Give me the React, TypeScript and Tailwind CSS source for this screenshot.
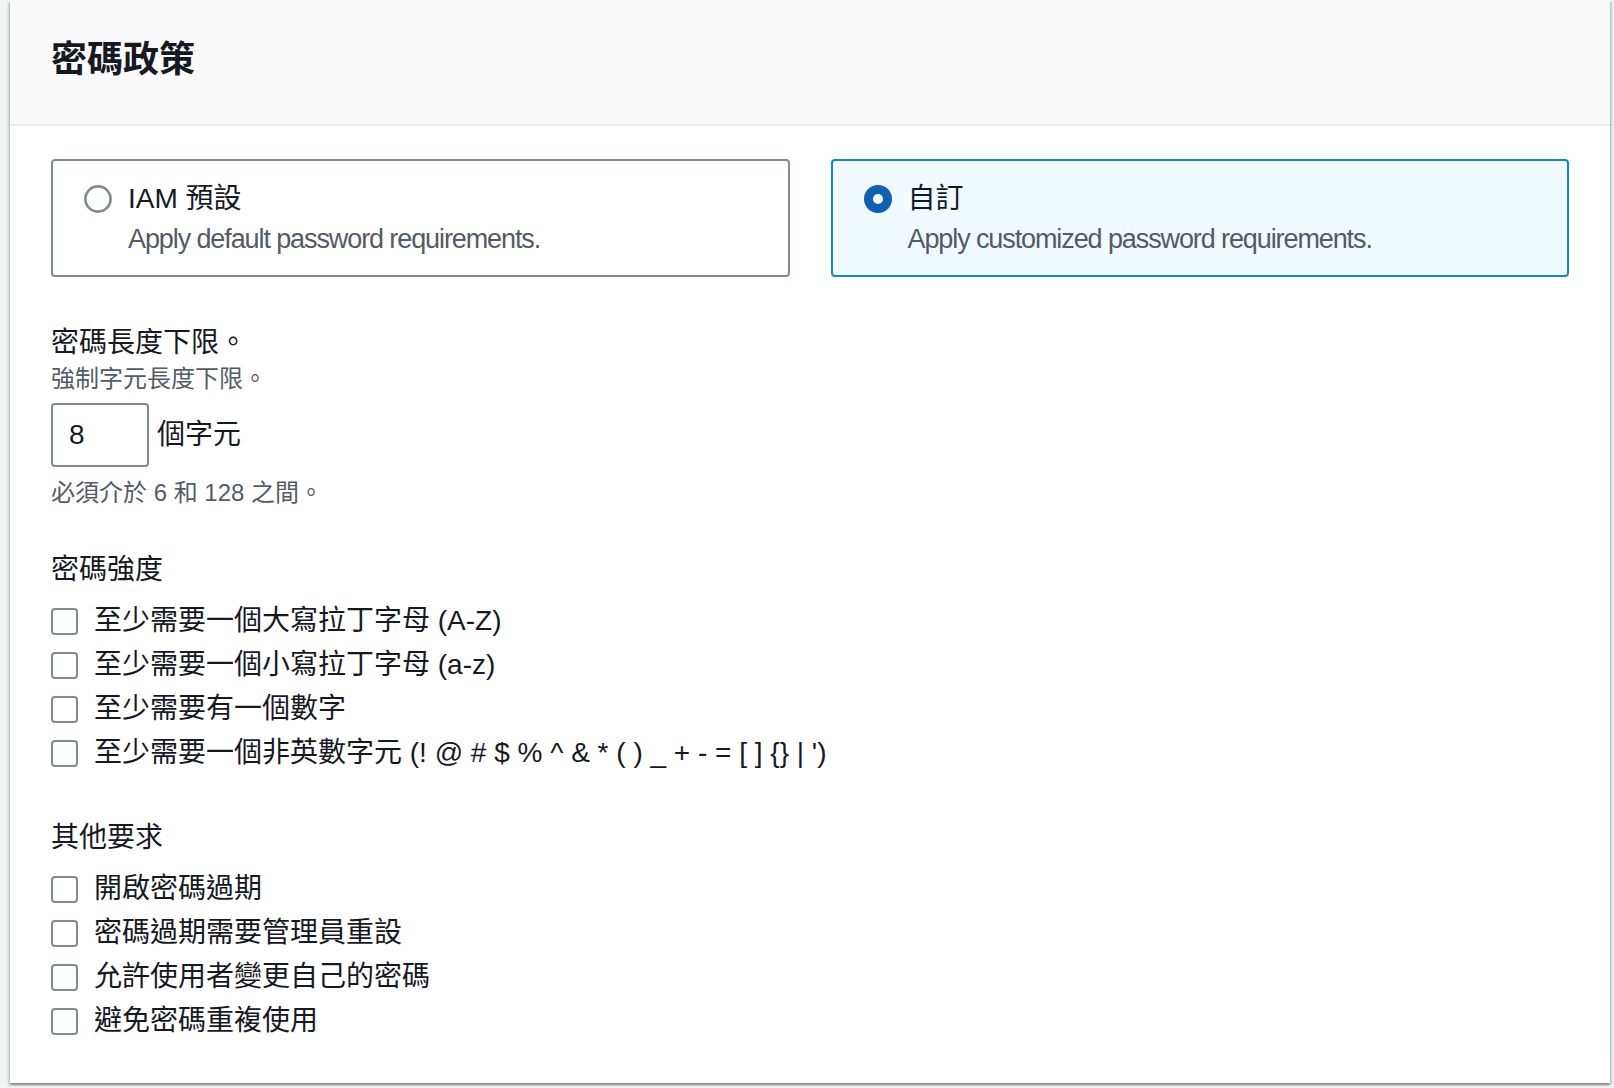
import { useState } from 'react';

interface Choice {
  id: string;
  title: string;
  description: string;
}

const policyChoices: Choice[] = [
  { id: 'default', title: 'IAM 預設', description: 'Apply default password requirements.' },
  { id: 'custom', title: '自訂', description: 'Apply customized password requirements.' },
];

const strengthRules = [
  '至少需要一個大寫拉丁字母 (A-Z)',
  '至少需要一個小寫拉丁字母 (a-z)',
  '至少需要有一個數字',
  "至少需要一個非英數字元 (! @ # $ % ^ & * ( ) _ + - = [ ] {} | ')",
];

const otherRules = [
  '開啟密碼過期',
  '密碼過期需要管理員重設',
  '允許使用者變更自己的密碼',
  '避免密碼重複使用',
];

function RadioMark({ checked }: { checked: boolean }) {
  return (
    <svg width="28" height="28" viewBox="0 0 28 28" className="shrink-0">
      {checked ? (
        <circle cx="14" cy="14" r="9.5" fill="#ffffff" stroke="#1061b1" strokeWidth="9" />
      ) : (
        <circle cx="14" cy="14" r="12.6" fill="#ffffff" stroke="#7f8c8d" strokeWidth="2.6" />
      )}
    </svg>
  );
}

function CheckRow({
  label,
  checked,
  onToggle,
}: {
  label: string;
  checked: boolean;
  onToggle: () => void;
}) {
  return (
    <label className="flex items-center gap-[16px] h-[40px] cursor-pointer">
      <span
        onClick={onToggle}
        className={`w-[27px] h-[27px] rounded-[4px] border-[2.5px] shrink-0 flex items-center justify-center ${
          checked ? 'bg-[#1061b1] border-[#1061b1]' : 'bg-white border-[#7f8c8d]'
        }`}
      >
        {checked && (
          <svg width="18" height="18" viewBox="0 0 18 18">
            <path d="M3 9l4 4 8-8" fill="none" stroke="#fff" strokeWidth="3" />
          </svg>
        )}
      </span>
      <span className="text-[28px] leading-[40px] text-[#16191f] whitespace-nowrap">{label}</span>
    </label>
  );
}

export default function App() {
  const [policy, setPolicy] = useState('custom');
  const [checked, setChecked] = useState<Record<string, boolean>>({});

  const toggle = (key: string) => setChecked({ ...checked, [key]: !checked[key] });

  return (
    <div className="min-h-screen bg-[#f2f3f3] pl-[10px] pb-[5px] font-['Liberation_Sans','Noto_Sans_CJK_TC',sans-serif]">
      <div className="w-[1600px] bg-white shadow-[0_2px_2px_0_rgba(0,28,36,0.3),2px_2px_2px_0_rgba(0,28,36,0.15),-2px_2px_2px_0_rgba(0,28,36,0.15)]">
        <div className="h-[126px] bg-[#fafafa] border-b-2 border-[#eaeded] pl-[41px] pt-[38px]">
          <h2 className="text-[36px] leading-[44px] font-bold text-[#16191f]">密碼政策</h2>
        </div>

        <div className="px-[41px] pt-[33px] pb-[42px]">
          <div className="grid grid-cols-2 gap-[41px]">
            {policyChoices.map((choice) => {
              const selected = policy === choice.id;
              return (
                <div
                  key={choice.id}
                  onClick={() => setPolicy(choice.id)}
                  className={`h-[118px] rounded-[4px] border-2 pl-[31px] pt-[18px] flex gap-[16px] cursor-pointer ${
                    selected ? 'bg-[#f1faff] border-[#1a86c0]' : 'bg-white border-[#7f8c8d]'
                  }`}
                >
                  <div className="h-[40px] flex items-center">
                    <RadioMark checked={selected} />
                  </div>
                  <div>
                    <div className="text-[28px] leading-[40px] text-[#16191f]">{choice.title}</div>
                    <div className="text-[27px] leading-[40px] tracking-[-1.1px] text-[#545b64]">
                      {choice.description}
                    </div>
                  </div>
                </div>
              );
            })}
          </div>

          <div className="mt-[46px]">
            <div className="text-[28px] leading-[40px] text-[#16191f]">密碼長度下限。</div>
            <div className="text-[24px] leading-[32px] text-[#545b64]">強制字元長度下限。</div>
            <div className="mt-[8px] flex items-center gap-[8px]">
              <input
                type="text"
                defaultValue="8"
                className="w-[98px] h-[64px] rounded-[4px] border-2 border-[#7f8c8d] pl-[16px] text-[28px] text-[#16191f] outline-none"
              />
              <span className="text-[28px] leading-[40px] text-[#16191f]">個字元</span>
            </div>
            <div className="mt-[10px] text-[24px] leading-[32px] text-[#545b64]">必須介於 6 和 128 之間。</div>
          </div>

          <div className="mt-[41px]">
            <div className="text-[28px] leading-[40px] text-[#16191f]">密碼強度</div>
            <div className="mt-[11px] flex flex-col gap-[4px]">
              {strengthRules.map((rule) => (
                <CheckRow key={rule} label={rule} checked={!!checked[rule]} onToggle={() => toggle(rule)} />
              ))}
            </div>
          </div>

          <div className="mt-[45px]">
            <div className="text-[28px] leading-[40px] text-[#16191f]">其他要求</div>
            <div className="mt-[11px] flex flex-col gap-[4px]">
              {otherRules.map((rule) => (
                <CheckRow key={rule} label={rule} checked={!!checked[rule]} onToggle={() => toggle(rule)} />
              ))}
            </div>
          </div>
        </div>
      </div>
    </div>
  );
}
